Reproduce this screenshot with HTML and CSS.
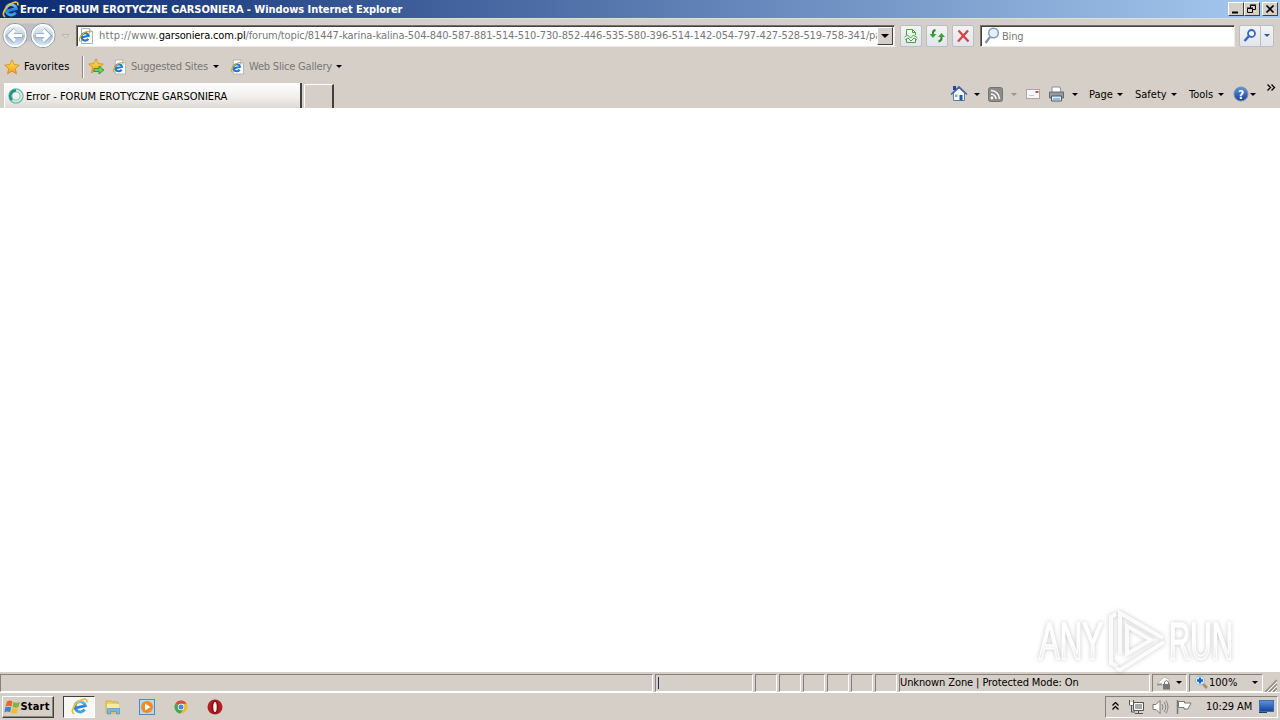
FILE: index.html
```html
<!DOCTYPE html>
<html lang="en">
<head>
  <meta charset="UTF-8" />
  <title>Error - FORUM EROTYCZNE GARSONIERA</title>
  <link rel="stylesheet" href="styles.css">
</head>
<body>

<!-- shared icons -->
<svg class="defs" width="0" height="0">
  <defs>
    <linearGradient id="orb" x1="0" y1="0" x2="0" y2="1">
      <stop offset="0" stop-color="#f4f8fc"/><stop offset=".48" stop-color="#c8d5e4"/>
      <stop offset=".52" stop-color="#a5bad2"/><stop offset="1" stop-color="#e4f4ff"/>
    </linearGradient>
    <linearGradient id="gold" x1="0" y1="0" x2="0" y2="1">
      <stop offset="0" stop-color="#ffe66b"/><stop offset="1" stop-color="#f29a13"/>
    </linearGradient>
    <linearGradient id="steel" x1="0" y1="0" x2="0" y2="1">
      <stop offset="0" stop-color="#5b95de"/><stop offset="1" stop-color="#143f95"/>
    </linearGradient>
    <linearGradient id="mark" x1="0" y1="0" x2="0" y2="1">
      <stop offset=".5" stop-color="#fff"/><stop offset=".75" stop-color="#ededed"/>
    </linearGradient>
    <linearGradient id="eblue" x1="0" y1="0" x2="0" y2="1">
      <stop offset="0" stop-color="#6cc5f6"/><stop offset=".5" stop-color="#2482d8"/><stop offset="1" stop-color="#3ba5ea"/>
    </linearGradient>
  </defs>
  <symbol id="ie" viewBox="0 0 16 16">
    <path d="M12.800 10.800A4.900 4.900 0 1 1 13.400 7.200L5 9.300" fill="none" stroke="url(#eblue)" stroke-width="2.800"/>
    <path d="M3 14.800C-1 13.500 2.500 6 8.500 2.500 12.500 .2 16 .6 14.700 4.200" fill="none" stroke="#efbf2c" stroke-width="1.600"/>
  </symbol>
  <symbol id="iepage" viewBox="0 0 16 16">
    <path d="M3.500 .5h8l3 3v12h-11z" fill="#fff" stroke="#a8b2c0"/>
    <path d="M11.500 .5v3h3" fill="#dfe6f0" stroke="#a8b2c0"/>
    <path d="M10.300 10.800A3.700 3.700 0 1 1 10.700 7.700L4.500 9.300" fill="none" stroke="#1f78cf" stroke-width="2.200"/>
    <path d="M2.500 13.500C-.3 12.500 2.500 7 7 4.300 10 2.600 12.400 3 11.500 5.500" fill="none" stroke="#dcab1c" stroke-width="1.200"/>
  </symbol>
  <symbol id="star" viewBox="0 0 16 16">
    <path d="M8 .8l2.100 4.800 5.200.5-3.900 3.500 1.100 5.300L8 12.200l-4.500 2.700 1.100-5.300L.7 6.100l5.200-.5z" fill="url(#gold)" stroke="#d58a12" stroke-width=".8"/>
  </symbol>
</svg>

<header class="titlebar">
  <svg class="title-icon" width="17" height="17"><use href="#ie"/></svg>
  <span class="title-text">Error - FORUM EROTYCZNE GARSONIERA - Windows Internet Explorer</span>
  <div class="window-buttons">
    <button><svg width="14" height="12"><path d="M3 9.500h6" stroke="#000" stroke-width="2"/></svg></button>
    <button><svg width="14" height="12"><path d="M5.500 5V2.500h5v4H8M5 2h6M2.500 5.500h5v4h-5zM2 5h6" fill="none" stroke="#000"/></svg></button>
    <button class="close"><svg width="14" height="12"><path d="M3.500 2.500l7 7M10.500 2.500l-7 7" stroke="#000" stroke-width="1.700"/></svg></button>
  </div>
</header>

<nav class="navbar">
  <svg class="travel" width="72" height="28" viewBox="0 0 72 28">
    <path d="M8 1.500h42q6 4 3 10L43 26 29 19 15 26 3 14z" fill="#b5b7c1" opacity=".7"/>
    <g stroke="#8592a7" fill="url(#orb)">
      <circle cx="15" cy="13.500" r="12"/>
      <circle cx="43" cy="13.500" r="12"/>
    </g>
    <g fill="none" stroke="#fff" stroke-width="1.500"><circle cx="15" cy="13.500" r="10.800"/><circle cx="43" cy="13.500" r="10.800"/></g>
    <g fill="none" stroke="#8fa8c6" stroke-width="4.500"><path d="M22.500 13.500H10M15 7.500l-6 6 6 6M35.500 13.500H48M43 7.500l6 6-6 6"/></g>
    <g fill="none" stroke="#fff" stroke-width="3.200"><path d="M22 13.500H10M15 8l-5.500 5.500 5.500 5.500M36 13.500h12M43 8l5.500 5.500-5.500 5.500"/></g>
    <path d="M62 12.500h7L65.500 16z" fill="#dfdbd5" stroke="#b1aaa4" stroke-width=".8"/>
  </svg>
  <div class="field address">
    <svg width="16" height="16"><use href="#iepage"/></svg>
    <span class="url"><span class="scheme">http://www.</span><b>garsoniera.com.pl</b>/forum/topic/81447-karina-kalina-504-840-587-881-514-510-730-852-446-535-580-396-514-142-054-797-427-528-519-758-341/page</span>
    <button class="drop"><i class="caret"></i></button>
  </div>
  <button class="tool"><svg width="16" height="16"><path d="M3.500 7V1.500h6l3 3V7M9.500 1.500v3h3M3.500 11v3.500h9V11" fill="#effaec" stroke="#48a246"/><path d="M1.500 9l3-2 3 3 3-3 4 3M2 12l3-2 3 3 3-3 3 2" fill="none" stroke="#48a246"/></svg></button>
  <button class="tool"><svg width="16" height="16"><path d="M6.500 2Q3.500 2.500 4 6M9.500 13.500q3.500-1 3-5" fill="none" stroke="#278a2a" stroke-width="2"/><path d="M.5 6h7L4 10zM9 9h7l-3.500-4z" fill="#35a536"/></svg></button>
  <button class="tool"><svg width="16" height="16"><path d="M3.500 2.500l10 11M13 2.500l-10 11" stroke="#d34645" stroke-width="2.300"/></svg></button>
  <div class="field search">
    <svg width="16" height="18"><circle cx="9.500" cy="6" r="4.800" fill="#e3f1fb" stroke="#8798b4" stroke-width="1.500"/><path d="M6 10l-4.500 6" stroke="#8990a0" stroke-width="2.200"/></svg>
    <span>Bing</span>
  </div>
  <div class="search-go">
    <button><svg width="16" height="16"><circle cx="9.500" cy="5.500" r="3.500" fill="#edf5ff" stroke="#3468c8" stroke-width="1.800"/><path d="M7 8l-4.500 5" stroke="#3468c8" stroke-width="2.500"/></svg></button>
    <button class="more"><i class="caret"></i></button>
  </div>
</nav>

<div class="favbar">
  <svg width="16" height="16"><use href="#star"/></svg>
  <span class="fav-label">Favorites</span>
  <div class="divider"></div>
  <svg class="add-fav" width="17" height="17" viewBox="0 0 17 17"><use href="#star" width="16" height="16"/><path d="M6 10.500h5V8l5 4-5 4v-2.500H6z" fill="#6bd05a" stroke="#259128" stroke-width=".8"/></svg>
  <svg class="link-icon" width="15" height="16"><use href="#iepage"/></svg>
  <span class="link suggested">Suggested Sites</span><i class="caret"></i>
  <svg class="link-icon slice" width="15" height="16"><use href="#iepage"/></svg>
  <span class="link gallery">Web Slice Gallery</span><i class="caret"></i>
</div>

<div class="tabrow">
  <div class="tab">
    <svg width="16" height="16"><circle cx="8" cy="8" r="5.700" fill="none" stroke="#6fb9af" stroke-width="4"/><circle cx="8" cy="8" r="5.500" fill="none" stroke="#c9ece7" stroke-width="2"/><path d="M8 2.500A5.500 5.500 0 0 0 4 12" fill="none" stroke="#278e83" stroke-width="2.500"/></svg>
    <span>Error - FORUM EROTYCZNE GARSONIERA</span>
  </div>
  <div class="newtab"></div>
  <div class="commands">
    <svg class="home" width="18" height="18"><path d="M3.500 8v7.500h11V8L9 3z" fill="#f7f9fc" stroke="#637da4"/><path d="M1 9.500L9 2l8 7.500" fill="none" stroke="#4265b1" stroke-width="1.700"/><path d="M3 1h3v4H3z" fill="#2c459c"/><path d="M9.500 10h3v5.500h-3z" fill="#2259a2"/><path d="M5 9.500h2.500v2.500H5z" fill="#7baed6"/></svg>
    <i class="caret"></i>
    <svg class="rss" width="15" height="15"><rect x=".5" y=".5" width="14" height="14" rx="2" fill="#8b8b8b" stroke="#747474"/><path d="M3 7a5 5 0 0 1 5 5M3 3.500A8.500 8.500 0 0 1 11.500 12" fill="none" stroke="#fff" stroke-width="1.500"/><circle cx="4" cy="11" r="1.400" fill="#fff"/></svg>
    <i class="caret dim"></i>
    <svg class="mail" width="15" height="11"><rect x=".5" y=".5" width="13" height="9" fill="#f8f6f6" stroke="#aaa6ac"/><path d="M9.500 3h3" stroke="#cf4754" stroke-width="2"/><path d="M3 6.500h5" stroke="#c8c5ce"/></svg>
    <svg class="print" width="17" height="17"><path d="M4 6V1h8l1 5" fill="#fff" stroke="#8a8f98"/><path d="M1.500 6h14v6h-14z" fill="#929aa6" stroke="#636a75"/><path d="M3.500 10h10v5h-10z" fill="#dcecfb" stroke="#515965"/><path d="M5 13h7" stroke="#4b89c9"/></svg>
    <i class="caret"></i>
    <span class="cmd page">Page</span><i class="caret"></i>
    <span class="cmd safety">Safety</span><i class="caret"></i>
    <span class="cmd tools">Tools</span><i class="caret"></i>
    <svg class="help" width="16" height="16"><circle cx="8" cy="8" r="7" fill="url(#steel)" stroke="#7c8daf"/><text x="5" y="12.500">?</text></svg>
    <i class="caret"></i>
    <svg class="chevrons" width="9" height="7"><path d="M.5.5l3 3-3 3M4.500.5l3 3-3 3" fill="none" stroke="#000" stroke-width="1.300"/></svg>
  </div>
</div>

<main class="page-view">
  <svg class="watermark" width="202" height="68" viewBox="0 0 202 68">
    <g class="mark-text">
      <text x="5" y="53" textLength="64" lengthAdjust="spacingAndGlyphs">ANY</text>
      <text x="135" y="53" textLength="64" lengthAdjust="spacingAndGlyphs">RUN</text>
    </g>
    <g class="mark-logo">
      <path d="M82 8l-5 3v46l6 3"/>
      <path d="M86 48V7l43 25"/>
      <path d="M130 36L86 64l-4-2"/>
      <path d="M93 20v28l24-14z"/>
    </g>
  </svg>
</main>

<div class="statusbar">
  <div class="cell message"></div>
  <div class="cell progress"><i></i></div>
  <div class="cell small"></div>
  <div class="cell small"></div>
  <div class="cell small"></div>
  <div class="cell small"></div>
  <div class="cell small"></div>
  <div class="cell small"></div>
  <div class="cell zone"><span>Unknown Zone | Protected Mode: On</span></div>
  <div class="cell privacy">
    <svg width="18" height="16"><path d="M1 9l7-7 5 2v6H8l-3-1z" fill="#f5f5f5" stroke="#bbb"/><path d="M1 9.500h5" stroke="#999" stroke-width="2"/><path d="M8.500 9V7q2-3 4 0v2" fill="none" stroke="#777"/><path d="M7 9h7v5.500H7z" fill="#777"/></svg>
    <i class="caret"></i>
  </div>
  <div class="cell zoom">
    <svg width="15" height="15"><path d="M8 8l5 5" stroke="#aa8e68" stroke-width="2.500"/><circle cx="6" cy="5.500" r="4.500" fill="#e8f4ff" stroke="#8fb8e3"/><path d="M3 5.500h6M6 2.500v6" stroke="#1767c0" stroke-width="2.300"/></svg>
    <span>100%</span><i class="caret"></i>
  </div>
  <svg class="grip" width="12" height="14"><path d="M0 14L12 2M4 14l8-8M8 14l4-4" stroke="#8f8983" stroke-width="1.500"/><path d="M2 14L12 4M6 14l6-6M10 14l2-2" stroke="#fff"/></svg>
</div>

<footer class="taskbar">
  <button class="start">
    <svg width="17" height="16"><path d="M3 2.500q3-2 5.500 0L7.500 7.500q-3-1.500-6 0z" fill="#e66a24"/><path d="M9.500 3q3 1.500 6.500 0l-1.500 5q-3 1.500-6 0z" fill="#7fb83c"/><path d="M1.200 8.500q3-1.500 6 0L6 13.500q-2.500-2-5.500 0z" fill="#3e82cb"/><path d="M8.200 9q3 1.500 6 0L13 14q-3 1.500-6 0z" fill="#f2bd28"/></svg>
    <span>Start</span>
  </button>
  <div class="task-active"><svg width="17" height="17"><use href="#ie"/></svg></div>
  <svg class="app explorer" width="16" height="16"><path d="M1 2h5l1 1h6v11H1z" fill="#f1cf69" stroke="#d6ac48"/><path d="M2 5h12v6H2z" fill="#fbe99e"/><path d="M2.500 15v-5.500h12V15h-3v-2.500h-6V15z" fill="#75b9e6" stroke="#4d94c9" stroke-width=".7"/></svg>
  <svg class="app player" width="16" height="16"><rect x=".5" y=".5" width="15" height="15" fill="#b8d7f1" stroke="#4b8cc4"/><circle cx="8" cy="8" r="6" fill="#f08b1d"/><path d="M6 4.500l5.500 3.500L6 11.500z" fill="#fff"/></svg>
  <svg class="app chrome" width="14" height="14"><circle cx="7" cy="7" r="6.500" fill="#e8be32"/><path d="M7 7L1.400 3.700A6.500 6.500 0 0 1 12.700 3.800H7z" fill="#d94b3d"/><path d="M7 7L1.400 3.700A6.500 6.500 0 0 0 6.500 13.500L9.500 9z" fill="#43a655"/><circle cx="7" cy="7" r="3.200" fill="#fff"/><circle cx="7" cy="7" r="2.500" fill="#4786df"/></svg>
  <svg class="app opera" width="16" height="16"><circle cx="8" cy="8" r="7.500" fill="#b31d21"/><ellipse cx="8" cy="8" rx="3.500" ry="6.500" fill="#831013"/><ellipse cx="8" cy="8" rx="1.700" ry="5" fill="#fff"/></svg>
  <div class="tray">
    <svg class="up" width="7" height="9"><path d="M.5 3.500l3-3 3 3M.5 7.500l3-3 3 3" fill="none" stroke="#000" stroke-width="1.300"/></svg>
    <svg class="network" width="17" height="16"><path d="M5.500 3.500h10v8h-10z" fill="#aaa" stroke="#555"/><path d="M6.500 4.500h8v6h-8z" fill="none" stroke="#fff"/><path d="M10.500 12v2M7 14.500h8" stroke="#555"/><path d="M1.500 1v5h4V1M3.500 6v7H7" fill="none" stroke="#555"/><path d="M2 3h3v3H2z" fill="#fff"/></svg>
    <svg class="volume" width="17" height="16"><path d="M1 5.500h3l4-4v13l-4-4H1z" fill="#fff" stroke="#777"/><path d="M10 5q2 3 0 6M12 3q3.500 5 0 10M14 1.500q4 6.500 0 13" fill="none" stroke="#888"/></svg>
    <svg class="flag" width="17" height="16"><path d="M1.500 1v14" stroke="#777" stroke-width="1.500"/><path d="M2.500 2.500h6v1.500h6.500L12 10H8V8.500H2.500z" fill="#fff" stroke="#777"/></svg>
    <time>10:29 AM</time>
    <svg class="desktop" width="15" height="13"><rect x=".5" y=".5" width="14" height="11" fill="url(#steel)" stroke="#3b6fad"/><path d="M0 12.500h8" stroke="#173f78"/></svg>
  </div>
</footer>

</body>
</html>
```
FILE: styles.css
```css
* {
  box-sizing: border-box;
}

body {
  margin: 0;
  width: 1280px;
  height: 720px;
  overflow: hidden;
  display: flex;
  flex-direction: column;
  background: #d5cfc8;
  color: #000;
  font-family: "DejaVu Sans Condensed", "DejaVu Sans", sans-serif;
  font-stretch: condensed;
  font-size: 11px;
  line-height: 14px;
  white-space: nowrap;
}

svg {
  display: block;
  flex: none;
}

.defs {
  position: absolute;
}

button {
  padding: 0;
  font: inherit;
  display: flex;
  align-items: center;
  justify-content: center;
  flex: none;
}

.caret {
  flex: none;
  border: 3px solid transparent;
  border-top-color: #000;
  border-bottom: 0;
}

.caret.dim {
  border-top-color: #999390;
}

/* title bar */
.titlebar {
  height: 18px;
  flex: none;
  display: flex;
  align-items: center;
  padding: 0 2px;
  background: linear-gradient(90deg, #0b2a70, #a6caf0);
}

.title-text {
  margin-left: 1px;
  padding-top: 1px;
  color: #fff;
  font-weight: bold;
  letter-spacing: -0.06px;
}

.window-buttons {
  display: flex;
  margin-left: auto;
}

.window-buttons button {
  width: 16px;
  height: 14px;
  background: #d5cfc8;
  border: 1px solid;
  border-color: #fff #404040 #404040 #fff;
}

.window-buttons .close {
  margin-left: 2px;
}

/* address row */
.navbar {
  height: 35px;
  flex: none;
  display: flex;
  align-items: center;
  padding-bottom: 1px;
  border-top: 1px solid #e2ddd8;
}

.travel {
  margin-right: 4px;
}

.field {
  height: 22px;
  display: flex;
  align-items: center;
  background: #fff;
  border: 1px solid;
  border-color: #77716b #eeebe6 #eeebe6 #77716b;
  box-shadow: inset 1px 1px #404040;
  color: #777;
}

.address {
  width: 819px;
  padding: 2px 1px 1px 2px;
}

.address svg {
  margin-left: -1px;
}

.url {
  width: 778px;
  margin-left: 5px;
  overflow: hidden;
  letter-spacing: -0.12px;
}

.scheme {
  letter-spacing: 0.27px;
}

.url b {
  color: #000;
  font-weight: normal;
  letter-spacing: -0.15px;
}

.drop {
  width: 16px;
  height: 18px;
  margin-left: auto;
  background: #d5cfc8;
  border: 1px solid;
  border-color: #fff #404040 #404040 #fff;
}

.drop .caret {
  border-width: 4px 4px 0;
}

.tool,
.search-go {
  width: 22px;
  height: 22px;
  margin-left: 4px;
  background: linear-gradient(#f3f3f3, #e2e5eb);
  border: 1px solid #b9bec7;
  border-radius: 2px;
}

.address + .tool {
  margin-left: 5px;
}

.search {
  width: 255px;
  margin-left: 6px;
  padding-left: 3px;
}

.search span {
  margin-left: 2px;
  padding-top: 2px;
  letter-spacing: -0.2px;
}

.search-go {
  width: 35px;
  display: flex;
}

.search-go button {
  width: 20px;
  background: none;
  border: 0;
}

.search-go .more {
  width: 13px;
  border-left: 1px solid #b9bec7;
}

.search-go .caret {
  border-top-color: #285caa;
}

/* favorites */
.favbar {
  height: 27px;
  flex: none;
  display: flex;
  align-items: center;
  padding-left: 4px;
}

.fav-label {
  width: 58px;
  margin-left: 4px;
  letter-spacing: 0.1px;
}

.divider {
  width: 2px;
  height: 22px;
  background: #8b8782;
  border-right: 1px solid #fff;
}

.add-fav {
  margin-left: 4px;
}

.link-icon {
  margin-left: 7px;
}

.link {
  margin-left: 4px;
  padding-top: 1px;
  color: #777;
  letter-spacing: -0.2px;
}

.suggested {
  width: 82px;
}

.slice {
  margin-left: 11px;
}

.gallery {
  width: 87px;
}

/* tabs and command bar */
.tabrow {
  height: 28px;
  flex: none;
  display: flex;
  align-items: flex-end;
  padding-left: 4px;
}

.tab {
  width: 298px;
  height: 25px;
  display: flex;
  align-items: center;
  padding-left: 3px;
  background: linear-gradient(#fefefe, #f3f1ef 50%, #dedad5);
  border-left: 1px solid #fff;
  border-right: 2px solid #404040;
}

.tab span {
  margin-left: 2px;
  padding-top: 2px;
}

.newtab {
  width: 30px;
  height: 24px;
  margin-left: 2px;
  border-top: 1px solid #fff;
  border-left: 1px solid #fff;
  border-right: 2px solid #404040;
}

.commands {
  height: 28px;
  width: 330px;
  margin-left: auto;
  display: flex;
  align-items: center;
}

.cmd {
  padding-top: 1px;
}

.home + .caret {
  margin-left: 6px;
}

.rss {
  margin-left: 8px;
}

.rss + .caret {
  margin-left: 8px;
}

.mail {
  margin-left: 9px;
}

.print {
  margin-left: 7px;
}

.print + .caret {
  margin-left: 7px;
}

.page {
  width: 28px;
  margin-left: 11px;
}

.safety {
  width: 36px;
  margin-left: 12px;
}

.tools {
  width: 29px;
  margin-left: 12px;
}

.help {
  margin-left: 9px;
}

.help text {
  fill: #fff;
  font-size: 12px;
  font-weight: bold;
}

.help + .caret {
  margin-left: 1px;
}

.chevrons {
  margin: 0 0 13px 11px;
}

/* document area */
.page-view {
  flex: 1;
  position: relative;
  background: #fff;
}

.watermark {
  position: absolute;
  right: 44px;
  bottom: -2px;
  overflow: visible;
}

.mark-text,
.mark-logo {
  filter: drop-shadow(0 0 2px rgba(0, 0, 0, 0.22));
}

.mark-text {
  fill: url(#mark);
  stroke: #fff;
  stroke-width: 1.5px;
  font-family: "Liberation Sans", sans-serif;
  font-size: 51px;
}

.mark-logo {
  fill: none;
  stroke: #fbfbfb;
  stroke-width: 4px;
}

/* status bar */
.statusbar {
  height: 21px;
  flex: none;
  display: flex;
  align-items: center;
  gap: 2px;
  padding-top: 1px;
  border-bottom: 1px solid #fff;
}

.cell {
  height: 18px;
  flex: none;
  display: flex;
  align-items: center;
  border: 1px solid;
  border-color: #85807b #fff #fff #85807b;
}

.cell span {
  padding-top: 1px;
}

.message {
  width: 653px;
}

.progress {
  width: 98px;
  padding-left: 2px;
}

.progress i {
  width: 1px;
  height: 12px;
  background: #1c315e;
}

.small {
  width: 22px;
}

.zone {
  width: 251px;
  letter-spacing: -0.1px;
}

.privacy {
  width: 35px;
  padding-left: 3px;
}

.privacy .caret {
  margin-left: 2px;
}

.zoom {
  width: 74px;
  padding-left: 4px;
}

.zoom span {
  width: 43px;
}

.grip {
  align-self: flex-end;
}

/* taskbar */
.taskbar {
  height: 27px;
  flex: none;
  display: flex;
  align-items: center;
  padding: 0 2px;
}

.start {
  width: 52px;
  height: 22px;
  padding-right: 2px;
  background: #d5cfc8;
  border: 1px solid;
  border-color: #fff #404040 #404040 #fff;
  box-shadow: inset -1px -1px #8b8782;
  font-weight: bold;
}

.start span {
  padding-top: 1px;
  letter-spacing: 0.2px;
}

.start svg {
  margin-right: -1px;
}

.task-active {
  width: 32px;
  height: 22px;
  margin-left: 9px;
  display: flex;
  align-items: center;
  justify-content: center;
  background: #f8f7f5;
  border: 1px solid;
  border-color: #404040 #fff #fff #404040;
}

.explorer {
  margin-left: 10px;
}

.player {
  margin-left: 18px;
}

.chrome {
  margin-left: 19px;
}

.opera {
  margin-left: 19px;
}

.tray {
  width: 173px;
  height: 22px;
  margin-left: auto;
  display: flex;
  align-items: center;
  padding-left: 6px;
  border: 1px solid;
  border-color: #85807b #fff #fff #85807b;
}

.network {
  margin-left: 9px;
}

.volume {
  margin-left: 7px;
}

.flag {
  margin-left: 7px;
}

time {
  width: 53px;
  margin-left: 13px;
  padding-top: 1px;
  letter-spacing: -0.1px;
}
```
